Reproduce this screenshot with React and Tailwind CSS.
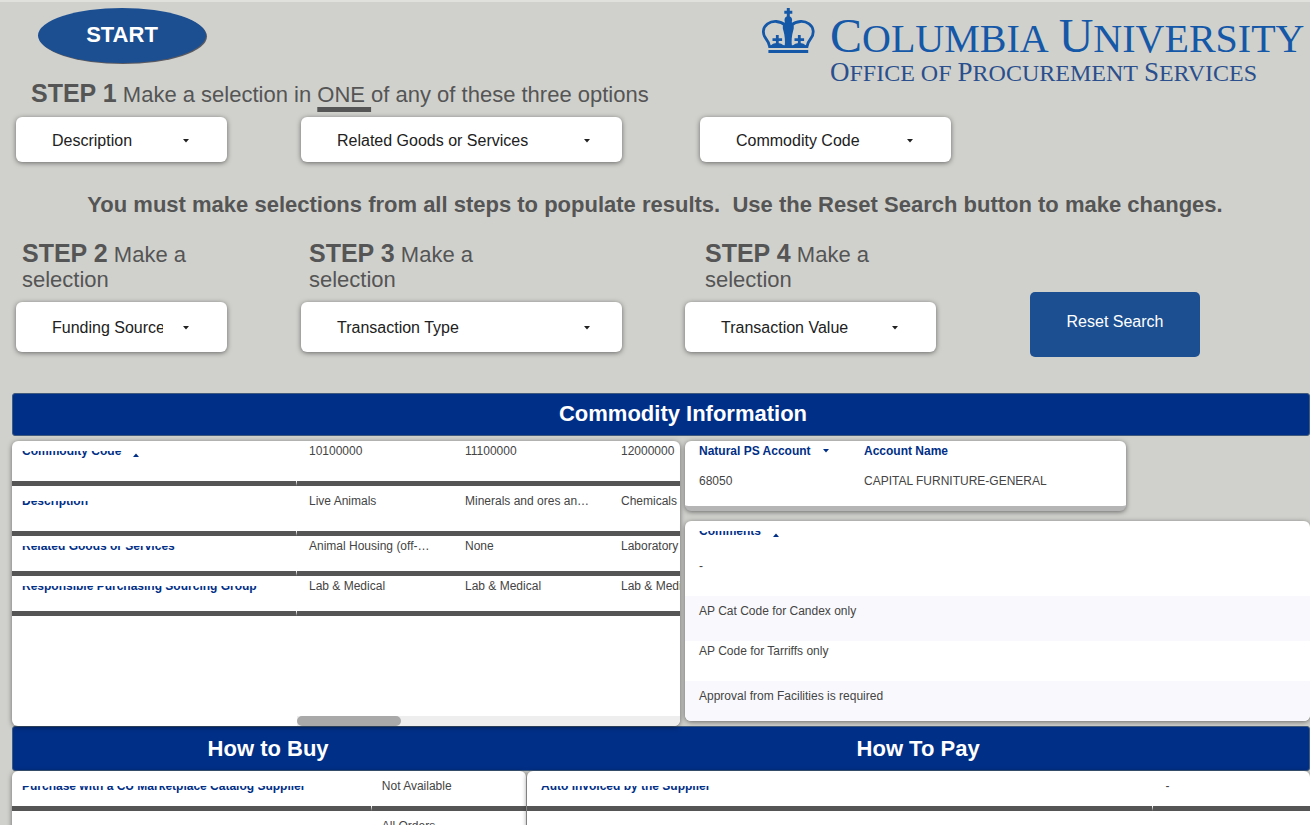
import React from "react";

const commodityRows = [
  { label: "Commodity Code", sorted: true, height: "h-[45px]", pad: "pt-0.5", labelPad: "pt-2.5", values: ["10100000", "11100000", "12000000"] },
  { label: "Description", height: "h-[50px]", pad: "pt-[7px]", labelPad: "pt-[15px]", values: ["Live Animals", "Minerals and ores and metals", "Chemicals"] },
  { label: "Related Goods or Services", height: "h-10", pad: "pt-0.5", labelPad: "pt-2.5", values: ["Animal Housing (off-site)", "None", "Laboratory"] },
  { label: "Responsible Purchasing Sourcing Group", height: "h-10", pad: "pt-0.5", labelPad: "pt-2.5", values: ["Lab & Medical", "Lab & Medical", "Lab & Medical"] },
];

const comments = [
  { text: "-", row: "h-[45px] bg-white", pad: "pt-[7px]" },
  { text: "AP Cat Code for Candex only", row: "h-[45px] bg-[#f9f9fd]", pad: "pt-[7px]" },
  { text: "AP Code for Tarriffs only", row: "h-10 bg-white", pad: "pt-0.5" },
  { text: "Approval from Facilities is required", row: "h-10 bg-[#f9f9fd]", pad: "pt-[7px]" },
];

const card = "overflow-hidden rounded-md bg-white shadow-[0_1px_5px_rgba(0,0,0,0.5)]";

function Caret({ up, className = "" }) {
  return (
    <svg viewBox="0 0 6 4" className={`h-1 w-1.5 shrink-0 fill-current ${className}`} aria-hidden="true">
      <path d={up ? "M0 4L3 0.5L6 4Z" : "M0 0H6L3 3.5Z"} />
    </svg>
  );
}

function Crown() {
  return (
    <svg viewBox="0 0 53 46" className="h-[46px] w-[53px] shrink-0" fill="none" stroke="#1558a8" aria-hidden="true">
      {/* top cross and orb */}
      <path d="M26.3 0V10M22.3 4.2H30.3" strokeWidth="3" />
      <circle cx="26.3" cy="12" r="3.8" fill="#1558a8" stroke="none" />
      {/* centre stem */}
      <path
        d="M23 14H29.6C32.2 16.5 32.3 19.5 31.1 23C29.8 27.5 29.2 33 30 39H22.6C23.4 33 22.8 27.5 21.5 23C20.3 19.5 20.4 16.5 23 14Z"
        fill="#1558a8"
        stroke="none"
      />
      {/* side arches */}
      <path
        d="M23.5 17.5C18 12.5 10.5 12.4 5.5 15.8C0.4 19.5 0.4 26 3.6 30.2C5.8 33 7 35.5 7.6 38.6H45C45.6 35.5 46.8 33 49 30.2C52.2 26 52.2 19.5 47.1 15.8C42.1 12.4 34.6 12.5 29.1 17.5"
        strokeWidth="2.8"
      />
      {/* small crosses */}
      <path d="M15.3 27V38M10.5 31.6H20.1M37.3 27V38M32.5 31.6H42.1" strokeWidth="2.8" />
      <path d="M8 38.4C11 33.8 19 33.8 22.6 38.4ZM30 38.4C33.6 33.8 41.6 33.8 44.6 38.4Z" fill="#1558a8" stroke="none" />
      <path d="M6.4 43.6H46.2" strokeWidth="3" />
    </svg>
  );
}

function Dropdown({ label, className, caretClass = "mr-[38px]" }) {
  return (
    <div className={`grid items-center rounded-md bg-white text-[#212121] shadow-[0_1px_5px_rgba(0,0,0,0.5)] ${className}`}>
      <select
        aria-label={label}
        className="col-start-1 row-start-1 h-full w-full appearance-none rounded-md bg-transparent pt-0.5 pr-16 pl-9 text-base"
      >
        <option>{label}</option>
      </select>
      <Caret className={`pointer-events-none col-start-1 row-start-1 mt-0.5 justify-self-end ${caretClass}`} />
    </div>
  );
}

function StepTitle({ step, children, className = "" }) {
  return (
    <h2 className={`text-[22px] leading-[25px] ${className}`}>
      <b className="text-[25px]">STEP {step}</b> {children}
    </h2>
  );
}

// Row headers sit in a short window, only the lower half of the line shows
function ClippedLabel({ children, sorted }) {
  return (
    <div className="flex h-2 items-end overflow-hidden whitespace-nowrap leading-4">
      <span>{children}</span>
      {sorted && <Caret up className="mb-0.5 ml-3" />}
    </div>
  );
}

function OptionTable({ label, values, labelWidth, labelPad, valuePad, className = "" }) {
  return (
    <div className={`${card} ${className}`}>
      <table className="w-full table-fixed border-separate border-spacing-0 text-left">
        <tbody>
          {values.map((value, i) => (
            <tr key={value} className="h-10 align-top">
              <th
                scope="row"
                className={`border-r border-b-[5px] border-r-white border-b-[#555] pt-[15px] text-[#002f87] ${labelWidth} ${labelPad}`}
              >
                {i === 0 && <ClippedLabel>{label}</ClippedLabel>}
              </th>
              <td className={`border-b-[5px] border-[#555] pt-[7px] leading-4 ${valuePad}`}>{value}</td>
            </tr>
          ))}
        </tbody>
      </table>
    </div>
  );
}

export default function App() {
  return (
    <div className="h-screen overflow-hidden border-t-2 border-[#e0e1dd] bg-[#d0d1cd] font-['Liberation_Sans',Arial,sans-serif] text-[#555]">
      {/* Header */}
      <header className="flex h-[79px] items-start justify-between pt-1.5 pl-[38px]">
        <button className="h-[55px] w-[168px] rounded-[50%] bg-[#1c4f91] pb-0.5 text-[22px] font-bold text-white shadow-[1px_1px_0_#5a5a60]">
          START
        </button>
        <div className="flex w-[548px] gap-[15px] font-['Liberation_Serif',serif] whitespace-nowrap uppercase">
          <Crown />
          <div className="pt-[5px]">
            <div className="text-[40px] leading-[46px] text-[#1558a8]">
              <span className="inline-block first-letter:text-[48px]">Columbia</span>{" "}
              <span className="inline-block first-letter:text-[48px]">University</span>
            </div>
            <div className="text-[24px] leading-[20px] text-[#2a4f8c]">
              <span className="inline-block first-letter:text-[27px]">Office</span>{" "}
              <span className="inline-block">of</span>{" "}
              <span className="inline-block first-letter:text-[27px]">Procurement</span>{" "}
              <span className="inline-block first-letter:text-[27px]">Services</span>
            </div>
          </div>
        </div>
      </header>

      {/* Step 1 */}
      <StepTitle step={1} className="pl-[31px]">
        Make a selection in{" "}
        <span className="underline decoration-[5px] underline-offset-[5px] [text-decoration-skip-ink:none]">ONE </span>
        of any of these three options
      </StepTitle>
      <div className="mt-2.5 grid grid-cols-[285fr_399fr_610fr] pl-4">
        <Dropdown label="Description" className="h-[45px] w-[211px]" />
        <Dropdown label="Related Goods or Services" className="h-[45px] w-[321px]" caretClass="mr-8" />
        <Dropdown label="Commodity Code" className="h-[45px] w-[251px]" />
      </div>

      <p className="mt-[29px] text-center text-[22px] leading-7 font-bold">
        You must make selections from all steps to populate results.&nbsp; Use the Reset Search button to make changes.
      </p>

      {/* Steps 2 - 4 */}
      <div className="mt-[22px] grid grid-cols-[285fr_384fr_345fr_280fr] pl-4">
        <div>
          <StepTitle step={2} className="w-[200px] pl-1.5">Make a selection</StepTitle>
          <Dropdown label="Funding Source" className="mt-2.5 h-[50px] w-[211px]" />
        </div>
        <div>
          <StepTitle step={3} className="w-[200px] pl-2">Make a selection</StepTitle>
          <Dropdown label="Transaction Type" className="mt-2.5 h-[50px] w-[321px]" caretClass="mr-8" />
        </div>
        <div>
          <StepTitle step={4} className="w-[220px] pl-5">Make a selection</StepTitle>
          <Dropdown label="Transaction Value" className="mt-2.5 h-[50px] w-[251px]" />
        </div>
        <button className="mt-[51px] h-[65px] w-[170px] rounded-[5px] bg-[#1c4f91] pb-1.5 text-base text-white">
          Reset Search
        </button>
      </div>

      <main className="mt-9 pl-3 text-xs text-[#444]">
        <h2 className="h-[43px] rounded-[3px] border border-[#3f5a7c] bg-[#002f87] pl-11 text-center text-[22px] leading-10 font-bold text-white">
          Commodity Information
        </h2>

        <div className="mt-[5px] grid grid-cols-[668fr_625fr] gap-[5px]">
          {/* Commodity table */}
          <section className={`${card} flex h-[285px] min-w-0 flex-col`}>
            <table className="w-[753px] table-fixed border-separate border-spacing-0 text-left">
              <tbody>
                {commodityRows.map((row) => (
                  <tr key={row.label} className={`align-top ${row.height}`}>
                    <th
                      scope="row"
                      className={`w-[285px] border-r border-b-[5px] border-r-white border-b-[#555] pl-2.5 text-[#002f87] ${row.labelPad}`}
                    >
                      <ClippedLabel sorted={row.sorted}>{row.label}</ClippedLabel>
                    </th>
                    {row.values.map((value, i) => (
                      <td
                        key={i}
                        className={`w-[156px] truncate border-b-[5px] border-[#555] pr-[18px] pl-3 leading-4 ${row.pad}`}
                      >
                        {value}
                      </td>
                    ))}
                  </tr>
                ))}
              </tbody>
            </table>
            <div className="mt-auto ml-[285px] h-2.5 bg-[#eee]">
              <div className="h-full w-[104px] rounded-full bg-[#a9a9a9]" />
            </div>
          </section>

          <div className="flex min-w-0 flex-col">
            {/* Accounts */}
            <section className={`${card} w-[441px] border-b-[5px] border-[#b5b5b5]`}>
              <table className="w-full table-fixed text-left leading-4">
                <thead className="text-[#002f87]">
                  <tr className="h-[30px] align-top">
                    <th className="w-[165px] pt-0.5 pl-3.5">
                      <span className="flex items-center gap-3">
                        Natural PS Account <Caret />
                      </span>
                    </th>
                    <th className="pt-0.5 pl-3.5">Account Name</th>
                  </tr>
                </thead>
                <tbody>
                  <tr className="h-[35px] align-top">
                    <td className="pt-0.5 pl-3.5">68050</td>
                    <td className="pt-0.5 pl-3.5">CAPITAL FURNITURE-GENERAL</td>
                  </tr>
                </tbody>
              </table>
            </section>

            {/* Comments */}
            <section className={`${card} mt-2.5 h-[200px]`}>
              <table className="w-full text-left leading-4">
                <thead className="text-[#002f87]">
                  <tr className="h-[30px] align-top">
                    <th className="pt-2.5 pl-3.5">
                      <ClippedLabel sorted>Comments</ClippedLabel>
                    </th>
                  </tr>
                </thead>
                <tbody>
                  {comments.map((comment) => (
                    <tr key={comment.text} className={`align-top ${comment.row}`}>
                      <td className={`pl-3.5 ${comment.pad}`}>{comment.text}</td>
                    </tr>
                  ))}
                </tbody>
              </table>
            </section>
          </div>
        </div>

        <div className="grid h-[45px] grid-cols-[511fr_787fr] rounded-[3px] border border-[#3f5a7c] bg-[#002f87] text-center text-[22px] leading-[43px] font-bold text-white">
          <h2>How to Buy</h2>
          <h2 className="pl-1">How To Pay</h2>
        </div>

        <div className="grid grid-cols-[514fr_783fr] gap-px">
          <OptionTable
            label="Purchase with a CU Marketplace Catalog Supplier"
            values={["Not Available", "All Orders"]}
            labelWidth="w-[70%]"
            labelPad="pl-2.5"
            valuePad="pl-2.5"
          />
          <OptionTable
            label="Auto Invoiced by the Supplier"
            values={["-", ""]}
            labelWidth="w-[80%]"
            labelPad="pl-3.5"
            valuePad="pl-3"
          />
        </div>
      </main>
    </div>
  );
}
